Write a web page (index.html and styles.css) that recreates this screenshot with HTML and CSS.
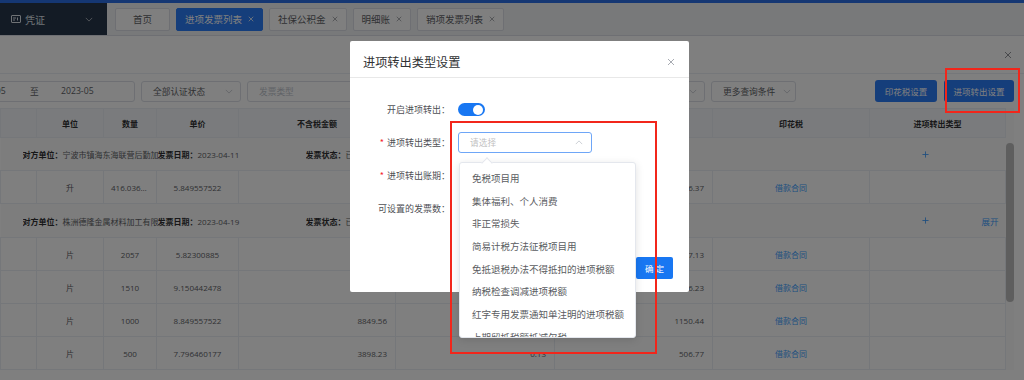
FILE: index.html
```html
<!DOCTYPE html>
<html>
<head>
<meta charset="utf-8">
<title>进项发票列表</title>
<link rel="stylesheet" href="styles.css">
</head>
<body>

<div class="app">
	<div class="topline"></div>
	<div class="navbar">
		<div class="side">
			<svg class="side-ico" viewBox="0 0 10 8"><rect x="0.5" y="0.5" width="9" height="7" rx="0.5"/><path d="M2 3h3M2 5h2M6.5 2.5v3"/></svg>
			<span>凭证</span>
			<svg class="chev side-chev" viewBox="0 0 10 6"><path d="M1 1l4 4 4-4"/></svg>
		</div>
		<div class="tabs">
			<span class="tab home">首页</span>
			<span class="tab on">进项发票列表<svg class="x" viewBox="0 0 8 8"><path d="M1 1l6 6M7 1L1 7"/></svg></span>
			<span class="tab">社保公积金<svg class="x" viewBox="0 0 8 8"><path d="M1 1l6 6M7 1L1 7"/></svg></span>
			<span class="tab">明细账<svg class="x" viewBox="0 0 8 8"><path d="M1 1l6 6M7 1L1 7"/></svg></span>
			<span class="tab">销项发票列表<svg class="x" viewBox="0 0 8 8"><path d="M1 1l6 6M7 1L1 7"/></svg></span>
		</div>
	</div><!-- end navbar -->

	<div class="page-top">
		<svg class="page-x" viewBox="0 0 8 8"><path d="M1 1l6 6M7 1L1 7"/></svg>
	</div>

	<div class="filters">
		<div class="field range"><span class="d1">2023-05</span><span class="to">至</span><span>2023-05</span></div>
		<div class="field sel"><span>全部认证状态</span><svg class="chev" viewBox="0 0 10 6"><path d="M1 1l4 4 4-4"/></svg></div>
		<div class="field kind"><span class="ph">发票类型</span><svg class="chev" viewBox="0 0 10 6"><path d="M1 1l4 4 4-4"/></svg></div>
		<div class="field more"><span>更多查询条件</span><svg class="chev" viewBox="0 0 10 6"><path d="M1 1l4 4 4-4"/></svg></div>
		<div class="spacer"></div>
		<button class="btn">印花税设置</button>
		<button class="btn wide">进项转出设置</button>
	</div><!-- end filters -->

	<div class="grid">
		<table class="list">
			<colgroup>
				<col style="width:36px"><col style="width:67px"><col style="width:53px"><col style="width:82px"><col style="width:157px"><col style="width:159px"><col style="width:158px"><col style="width:157px"><col style="width:136px">
			</colgroup>
			<tr class="head">
				<th></th><th>单位</th><th>数量</th><th>单价</th><th>不含税金额</th><th>税率</th><th>税额</th><th>印花税</th><th>进项转出类型</th>
			</tr>
			<tr class="grp">
				<td colspan="8"><span class="who"><b>对方单位：</b>宁波市镇海东海联营后勤加工厂</span><span class="when"><b>发票日期：</b>2023-04-11</span><span class="state"><b>发票状态：</b>已认证</span></td>
				<td class="ops"><div class="ops-in"><svg class="plus" viewBox="0 0 8 8"><path d="M4 0.5v7M0.5 4h7"/></svg></div></td>
			</tr>
			<tr class="item">
				<td></td><td class="c">升</td><td class="c cut">416.0362832</td><td class="c">5.849557522</td><td class="r">2433.62</td><td class="r">0.13</td><td class="r">316.37</td><td class="c"><a>借款合同</a></td><td></td>
			</tr>
			<tr class="grp tall">
				<td colspan="8"><span class="who"><b>对方单位：</b>株洲德隆金属材料加工有限公司</span><span class="when"><b>发票日期：</b>2023-04-19</span><span class="state"><b>发票状态：</b>已认证</span></td>
				<td class="ops"><div class="ops-in"><svg class="plus" viewBox="0 0 8 8"><path d="M4 0.5v7M0.5 4h7"/></svg><a class="open">展开</a></div></td>
			</tr>
			<tr class="item">
				<td></td><td class="c">片</td><td class="c">2057</td><td class="c">5.82300885</td><td class="r">11977.93</td><td class="r">0.13</td><td class="r">1557.13</td><td class="c"><a>借款合同</a></td><td></td>
			</tr>
			<tr class="item">
				<td></td><td class="c">片</td><td class="c">1510</td><td class="c">9.150442478</td><td class="r">13817.17</td><td class="r">0.13</td><td class="r">1796.23</td><td class="c"><a>借款合同</a></td><td></td>
			</tr>
			<tr class="item">
				<td></td><td class="c">片</td><td class="c">1000</td><td class="c">8.849557522</td><td class="r">8849.56</td><td class="r">0.13</td><td class="r">1150.44</td><td class="c"><a>借款合同</a></td><td></td>
			</tr>
			<tr class="item">
				<td></td><td class="c">片</td><td class="c">500</td><td class="c">7.796460177</td><td class="r">3898.23</td><td class="r">0.13</td><td class="r">506.77</td><td class="c"><a>借款合同</a></td><td></td>
			</tr>
		</table>
		<div class="vbar"><div class="thumb"></div></div>
	</div><!-- end grid -->
</div><!-- end app -->

<div class="mask"></div>

<div class="modal">
	<div class="modal-head">
		<span class="modal-title">进项转出类型设置</span>
		<svg class="modal-x" viewBox="0 0 8 8"><path d="M1 1l6 6M7 1L1 7"/></svg>
	</div>
	<div class="modal-body">
		<div class="row"><label>开启进项转出：</label><span class="switch"><i></i></span></div>
		<div class="row"><label><em>*</em>进项转出类型：</label><div class="picker"><span>请选择</span><svg class="chev up" viewBox="0 0 10 6"><path d="M1 5l4-4 4 4"/></svg></div></div>
		<div class="row"><label><em>*</em>进项转出账期：</label></div>
		<div class="row"><label>可设置的发票数：</label></div>
	</div>
	<div class="modal-foot">
		<button class="btn-ok">确&nbsp;定</button>
	</div>
</div><!-- end modal -->

<div class="dropdown">
	<ul>
		<li>免税项目用</li>
		<li>集体福利、个人消费</li>
		<li>非正常损失</li>
		<li>简易计税方法征税项目用</li>
		<li>免抵退税办法不得抵扣的进项税额</li>
		<li>纳税检查调减进项税额</li>
		<li>红字专用发票通知单注明的进项税额</li>
		<li>上期留抵税额抵减欠税</li>
	</ul>
</div><!-- end dropdown -->

<div class="mark mark-a"></div>
<div class="mark mark-b"></div>

</body>
</html>
```

FILE: styles.css
```css
* {
box-sizing: border-box;
}

body {
margin: 0;
width: 1024px;
height: 380px;
overflow: hidden;
position: relative;
font-family: "Open Sans", "Noto Sans CJK SC", sans-serif;
color: #606266;
background: #fff;
}

svg {
fill: none;
stroke: currentColor;
stroke-width: 1;
}

.topline {
height: 3px;
background: #2b6fe6;
}

/* navbar + tabs */
.navbar {
display: flex;
height: 33px;
background: #f0f2f5;
border-bottom: 1px solid #dcdfe6;
}
.side {
width: 107px;
background: #26364a;
color: #dfe4ea;
font-size: 10px;
display: flex;
align-items: center;
padding: 0 14px 0 11px;
}
.side-ico {
width: 10px;
height: 8px;
margin-right: 4px;
}
.side-chev {
margin-left: auto;
color: #8a94a3;
}
.tabs {
display: flex;
align-items: center;
gap: 6px;
padding-left: 8px;
}
.tab {
height: 23px;
display: flex;
align-items: center;
padding: 0 8px;
background: #fff;
border: 1px solid #dcdfe6;
border-radius: 2px;
font-size: 9.5px;
color: #606266;
}
.tab.home {
padding: 0 17px;
}
.tab.on {
background: #2b7cf6;
border-color: #2b7cf6;
color: #fff;
}
.tab .x {
width: 6px;
height: 6px;
margin-left: 6px;
color: #909399;
}
.tab.on .x {
color: #fff;
}

.page-top {
height: 38px;
display: flex;
align-items: center;
justify-content: flex-end;
padding-right: 12px;
border-bottom: 1px solid #ebeef5;
}
.page-x {
width: 8px;
height: 8px;
color: #909399;
}

/* filters */
.filters {
height: 34px;
display: flex;
align-items: center;
gap: 6px;
padding-right: 10px;
font-size: 8.7px;
}
.field {
height: 21px;
display: flex;
align-items: center;
border: 1px solid #dcdfe6;
border-radius: 3px;
background: #fff;
color: #606266;
}
.chev {
width: 8px;
height: 5px;
color: #c0c4cc;
}
.range {
margin-left: -36px;
width: 171px;
padding-left: 8px;
}
.range .d1 {
width: 57px;
}
.range .to {
width: 31px;
}
.sel {
width: 100px;
padding: 0 7px 0 11px;
justify-content: space-between;
}
.kind {
width: 458px;
padding: 0 7px 0 11px;
justify-content: space-between;
}
.ph {
color: #c0c4cc;
}
.more {
width: 85px;
padding-left: 11px;
gap: 8px;
}
.spacer {
flex: 1;
}
.btn {
height: 22px;
width: 62px;
border: 0;
border-radius: 3px;
background: #2b7cf6;
color: #fff;
font-family: inherit;
font-size: 8.5px;
padding: 0;
}
.btn.wide {
width: 70px;
margin-left: 1px;
}

/* table */
.grid {
display: flex;
}
.list {
width: 1005px;
border-collapse: collapse;
table-layout: fixed;
font-size: 8px;
}
.list th, .list td {
border: 1px solid #ebeef5;
padding: 0 8px;
white-space: nowrap;
overflow: hidden;
}
.list th {
background: #f5f7fa;
color: #303133;
font-weight: 700;
}
.list tr.head {
height: 29px;
}
.list tr.item {
height: 33px;
}
.list tr.grp {
height: 33px;
background: #fafafa;
}
.list tr.grp.tall {
height: 34px;
}
.list .grp td {
border-left: none;
border-right: none;
padding-left: 22px;
color: #606266;
}
.list .grp b {
color: #303133;
}
.who, .when, .state {
display: inline-block;
overflow: hidden;
vertical-align: middle;
}
.who {
width: 135px;
}
.when {
width: 148px;
}
.list .grp td.ops {
padding: 0;
}
.ops-in {
display: flex;
align-items: center;
padding: 0 7px 0 52px;
}
.plus {
width: 7px;
height: 7px;
color: #409eff;
}
.open {
margin-left: auto;
color: #409eff;
font-size: 8.5px;
}
.c {
text-align: center;
}
.r {
text-align: right;
}
.list td.cut {
padding: 0 7px;
text-overflow: ellipsis;
}
.list a {
color: #409eff;
}
.vbar {
width: 8px;
background: #fafafa;
padding-top: 35px;
}
.thumb {
height: 159px;
border-radius: 4px;
background: #bdbdbd;
}

.mask {
position: absolute;
left: 0;
top: 0;
width: 100%;
height: 100%;
background: rgba(0, 0, 0, 0.5);
}

/* modal */
.modal {
position: absolute;
left: 350px;
top: 41px;
width: 339px;
height: 251px;
background: #fff;
border-radius: 2px;
display: flex;
flex-direction: column;
font-family: "Noto Sans CJK SC", sans-serif;
}
.modal-head {
height: 37px;
padding: 6px 14px 0 13px;
display: flex;
align-items: center;
justify-content: space-between;
border-bottom: 1px solid #e8e8e8;
}
.modal-title {
font-size: 12.2px;
color: #303133;
}
.modal-x {
width: 8px;
height: 8px;
color: #a8abb2;
}
.modal-body {
flex: 1;
padding-top: 15px;
}
.row {
height: 33px;
display: flex;
align-items: center;
}
.row label {
width: 100px;
text-align: right;
font-size: 9px;
color: #4e5055;
}
.row em {
font-style: normal;
color: #f5222d;
margin-right: 3px;
}
.switch {
position: relative;
margin-left: 8px;
width: 27px;
height: 13px;
border-radius: 7px;
background: #1877f2;
}
.switch i {
position: absolute;
right: 2px;
top: 1.5px;
width: 10px;
height: 10px;
border-radius: 50%;
background: #fff;
}
.picker {
margin-left: 8px;
width: 134px;
height: 21px;
border: 1px solid #6ea6f7;
border-radius: 3px;
display: flex;
align-items: center;
justify-content: space-between;
padding: 0 8px 0 11px;
font-size: 8.7px;
color: #bfbfbf;
}
.modal-foot {
display: flex;
justify-content: flex-end;
padding: 0 16px 13px;
}
.btn-ok {
height: 22px;
width: 37px;
border: 0;
border-radius: 2px;
background: #1877f2;
color: #fff;
font-family: inherit;
font-size: 8.5px;
padding: 0;
}

/* select dropdown */
.dropdown {
position: absolute;
left: 459px;
top: 162px;
width: 177px;
height: 176px;
background: #fff;
border: 1px solid #e4e7ed;
border-radius: 3px;
box-shadow: 0 2px 8px rgba(0, 0, 0, 0.12);
font-family: "Noto Sans CJK SC", sans-serif;
}
.dropdown:before {
content: "";
position: absolute;
left: 23px;
top: -4px;
width: 7px;
height: 7px;
background: #fff;
border-left: 1px solid #e4e7ed;
border-top: 1px solid #e4e7ed;
transform: rotate(45deg);
}
.dropdown ul {
list-style: none;
margin: 0;
padding: 4px 0 0;
height: 100%;
overflow: hidden;
}
.dropdown li {
height: 22.7px;
line-height: 22.7px;
padding-left: 12px;
font-size: 9.5px;
color: #5a5c61;
white-space: nowrap;
}

/* red annotations */
.mark {
position: absolute;
border: 2px solid #f2261b;
}
.mark-a {
left: 450px;
top: 121px;
width: 207px;
height: 233px;
}
.mark-b {
left: 945px;
top: 68px;
width: 75px;
height: 45px;
}
```
